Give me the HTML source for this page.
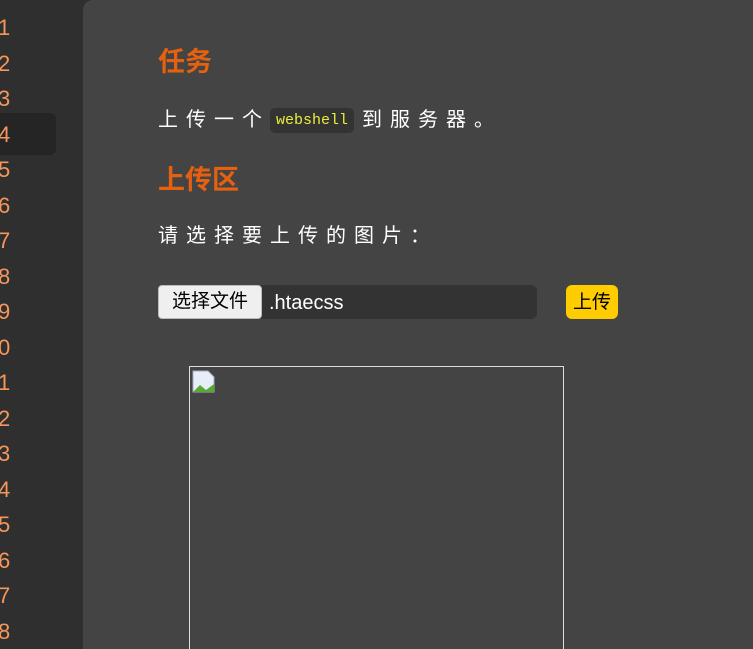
<!DOCTYPE html>
<html style="margin:0;width:753px;height:649px;overflow:hidden"><head><meta charset="utf-8"><style>
body{margin:0;width:753px;height:649px;overflow:hidden;background:#2f2f2f;font-family:"Liberation Sans","Noto Sans CJK SC",sans-serif;position:relative}
.ln{position:absolute;left:-2px;color:#f5965a;font-size:22px;line-height:20px}
.hl{position:absolute;left:0;top:113px;width:56px;height:42px;background:#252525;border-radius:0 6px 6px 0}
.main{position:absolute;left:83px;top:0;width:670px;height:649px;background:#444;border-radius:10px 0 0 0}
.h{position:absolute;left:158px;color:#e5600f;font-size:27px;font-weight:bold;font-family:"Noto Sans CJK SC",sans-serif;line-height:30px}
.p{position:absolute;left:158px;color:#fff;font-size:20px;letter-spacing:8px;line-height:24px}
.code{display:inline-block;background:#333;color:#ecec3a;font-family:"Liberation Mono",monospace;font-size:15px;letter-spacing:0;padding:0 6px;height:25px;line-height:25px;border-radius:5px;vertical-align:middle;margin-right:8px}
.file{position:absolute;left:158px;top:285px;width:379px;height:34px;background:#333;border-radius:6px}
.btn{position:absolute;left:0;top:0;width:102px;height:32px;border:1px solid #bbb;background:#efefef;border-radius:4px;font-size:19px;line-height:32px;text-align:center;color:#000}
.fn{position:absolute;left:111px;top:1px;line-height:34px;color:#fff;font-size:20px}
.up{position:absolute;left:566px;top:285px;width:52px;height:34px;background:#fc0;border-radius:6px;font-size:19px;line-height:36px;text-align:center;color:#000}
.img{position:absolute;left:189px;top:366px;width:373px;height:300px;border:1px solid #ddd}
</style></head><body>
<div class="hl"></div>
<div class="ln" style="top:18px">1</div><div class="ln" style="top:54px">2</div><div class="ln" style="top:89px">3</div><div class="ln" style="top:125px">4</div><div class="ln" style="top:160px">5</div><div class="ln" style="top:196px">6</div><div class="ln" style="top:231px">7</div><div class="ln" style="top:267px">8</div><div class="ln" style="top:302px">9</div><div class="ln" style="top:338px">0</div><div class="ln" style="top:373px">1</div><div class="ln" style="top:409px">2</div><div class="ln" style="top:444px">3</div><div class="ln" style="top:480px">4</div><div class="ln" style="top:515px">5</div><div class="ln" style="top:551px">6</div><div class="ln" style="top:586px">7</div><div class="ln" style="top:622px">8</div>
<div class="main"></div>
<div class="h" style="top:45px">任务</div>
<div class="p" style="top:108px">上传一个<span class="code">webshell</span>到服务器。</div>
<div class="h" style="top:163px">上传区</div>
<div class="p" style="top:224px">请选择要上传的图片：</div>
<div class="file"><div class="btn">选择文件</div><div class="fn">.htaecss</div></div>
<div class="up">上传</div>
<div class="img"><svg width="24" height="24" style="position:absolute;left:2px;top:3px"><path d="M1 1h15l6 6v15H1z" fill="#e8eef8" stroke="#aab" stroke-width="1"/><path d="M1 22l7-7 6 5 8-6v8z" fill="#5a3"/></svg></div>
</body></html>
